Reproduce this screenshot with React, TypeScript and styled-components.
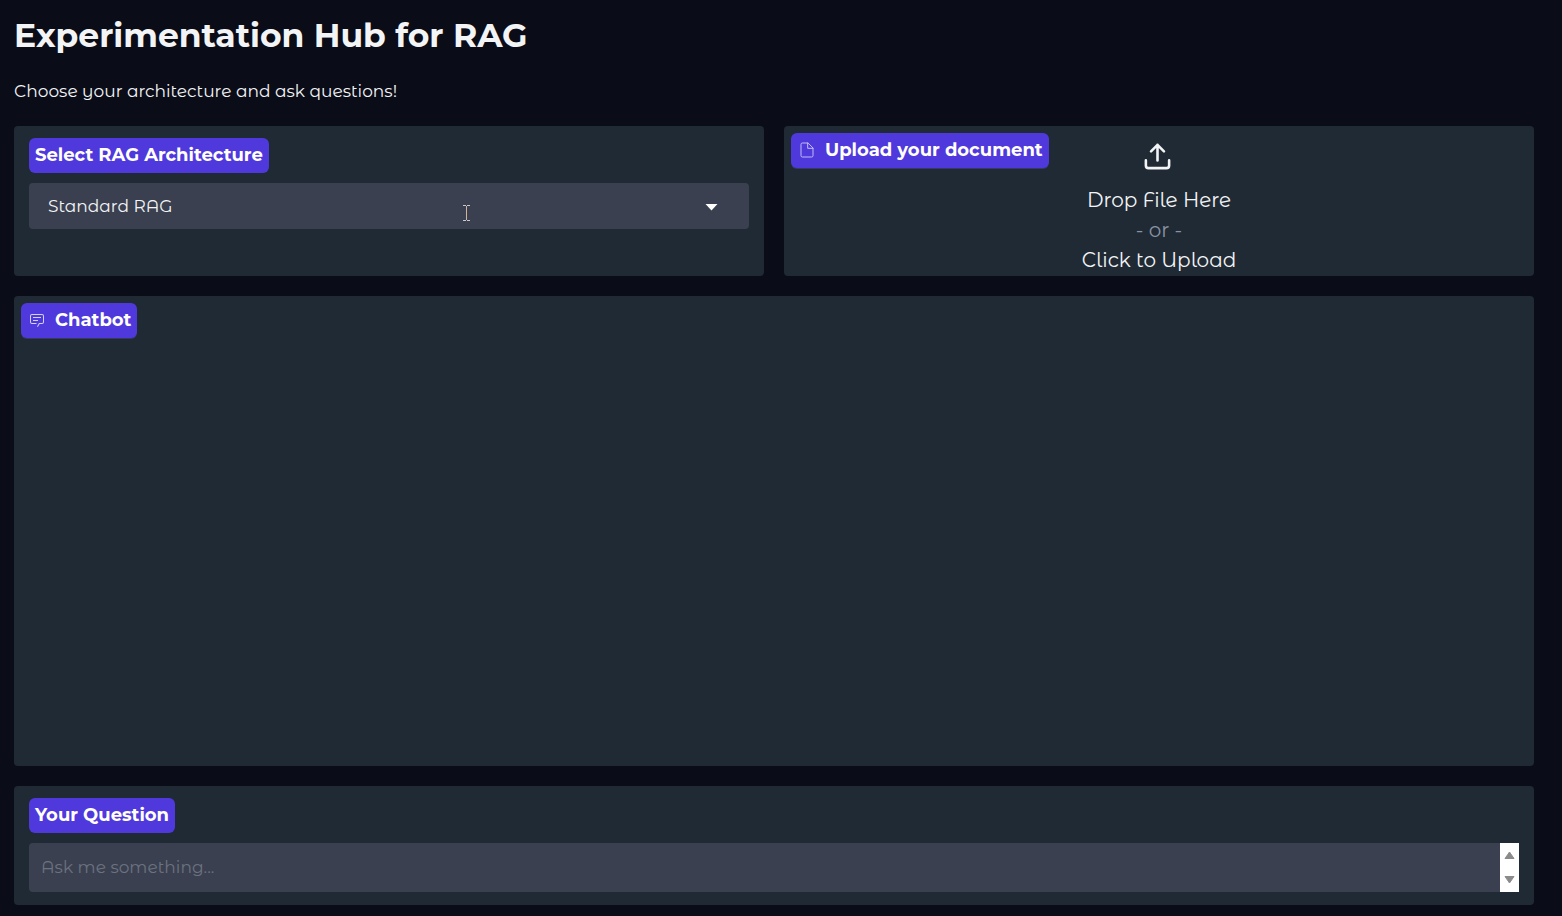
import React from "react";
import styled, { createGlobalStyle } from "styled-components";

const GlobalStyle = createGlobalStyle`
  *, *::before, *::after { box-sizing: border-box; }
  body {
    margin: 0;
    background: #0a0c17;
    color: #f3f4f6;
    font-family: "Montserrat Alternates", Montserrat, Inter, sans-serif;
    font-size: 17px;
    line-height: 27px;
  }
`;

const Page = styled.main`
  display: flex;
  flex-direction: column;
  gap: 20px;
  padding: 14px 28px 10px 14px;
`;

const Intro = styled.header`
  display: flex;
  flex-direction: column;
  gap: 22px;
  padding-bottom: 1px;
`;

const Title = styled.h1`
  margin: 0;
  font-family: Montserrat, Inter, sans-serif;
  font-size: 33px;
  font-weight: 700;
  line-height: 42px;
`;

const Lead = styled.p`
  margin: 0;
`;

const Row = styled.div`
  display: grid;
  grid-template-columns: 1fr 1fr;
  gap: 20px;
`;

const Panel = styled.section<{ $padded?: boolean; $minHeight?: number }>`
  position: relative;
  padding: ${(p) => (p.$padded ? "12px 15px 13px" : "0")};
  min-height: ${(p) => p.$minHeight ?? 0}px;
  border-radius: 4px;
  background: #202a35;
`;

const badge = `
  align-items: center;
  gap: 10px;
  height: 35px;
  padding: 0 6px 1px;
  border-radius: 6px;
  background: #4f38dc;
  color: #ffffff;
  font-family: Montserrat, Inter, sans-serif;
  font-size: 18px;
  font-weight: 700;
`;

const FieldLabel = styled.label`
  display: inline-flex;
  ${badge}
`;

const CornerLabel = styled.div`
  position: absolute;
  top: 7px;
  left: 7px;
  display: flex;
  pointer-events: none;
  ${badge}
  box-shadow: 0 1px 0 #343a63;

  svg {
    margin: 0 0 0 2px;
  }
`;

const Field = styled.div`
  position: relative;
  display: flex;
  margin-top: 10px;
  border-radius: 4px;
  background: #3a404f;
`;

const Select = styled.select`
  flex: 1;
  height: 46px;
  padding: 0 40px 0 19px;
  border: 0;
  border-radius: 4px;
  appearance: none;
  background: transparent;
  color: #f3f4f6;
  font: inherit;
`;

const Caret = styled.svg`
  position: absolute;
  top: 21px;
  right: 31px;
  pointer-events: none;
`;

const TextCursor = styled.svg`
  position: absolute;
  top: 22px;
  left: 60.3%;
  pointer-events: none;
`;

const DropZone = styled.button`
  display: flex;
  flex-direction: column;
  align-items: center;
  width: 100%;
  padding: 15px 0 0;
  border: 0;
  background: transparent;
  color: #f3f4f6;
  font: inherit;
  font-size: 20px;
  line-height: 30px;
  cursor: pointer;

  svg {
    margin: 0 4px 13px 0;
  }
`;

const Muted = styled.span`
  color: #8b93a3;
`;

const Question = styled.textarea`
  flex: 1;
  height: 49px;
  padding: 11px 12px;
  border: 0;
  border-radius: 4px;
  resize: none;
  overflow: hidden;
  background: transparent;
  color: #f3f4f6;
  font: inherit;

  &::placeholder {
    color: #6b7280;
    opacity: 1;
  }
`;

const Scroller = styled.div`
  display: flex;
  flex-direction: column;
  justify-content: space-between;
  width: 19px;
  padding: 2px 0;
  background: #ffffff;
`;

const ScrollButton = styled.button`
  display: flex;
  align-items: center;
  justify-content: center;
  height: 20px;
  padding: 0;
  border: 0;
  background: transparent;
`;

export default function App() {
  return (
    <>
      <GlobalStyle />
      <Page>
        <Intro>
          <Title>Experimentation Hub for RAG</Title>
          <Lead>Choose your architecture and ask questions!</Lead>
        </Intro>

        <Row>
          <Panel $padded $minHeight={150}>
            <FieldLabel htmlFor="architecture">Select RAG Architecture</FieldLabel>
            <Field>
              <Select id="architecture" defaultValue="standard">
                <option value="standard">Standard RAG</option>
              </Select>
              <TextCursor width="7" height="17" viewBox="0 0 7 17" shapeRendering="crispEdges" aria-hidden="true">
                <path d="M0 .5h3M4 .5h3M0 15.5h3M4 15.5h3" stroke="#c9c9cc" />
                <path d="M3.5 1v14" stroke="#cdb596" />
              </TextCursor>
              <Caret width="13" height="7" viewBox="0 0 13 7" aria-hidden="true">
                <path d="M.5 0h12l-6 6.5z" fill="#ffffff" />
              </Caret>
            </Field>
          </Panel>

          <Panel $minHeight={150}>
            <DropZone type="button">
              <svg width="31" height="31" viewBox="0 0 24 24" fill="none" stroke="currentColor" strokeWidth="2" strokeLinecap="round" strokeLinejoin="round" aria-hidden="true">
                <path d="M21 15v4a2 2 0 0 1-2 2H5a2 2 0 0 1-2-2v-4" />
                <path d="M17 8l-5-5-5 5M12 3v12" />
              </svg>
              <span>Drop File Here</span>
              <Muted>- or -</Muted>
              <span>Click to Upload</span>
            </DropZone>
            <CornerLabel>
              <svg width="16" height="16" viewBox="0 0 24 24" fill="none" stroke="#c4bcf5" strokeWidth="1.5" strokeLinecap="round" strokeLinejoin="round" aria-hidden="true">
                <path d="M13 1.5H5a2 2 0 0 0-2 2v17a2 2 0 0 0 2 2h14a2 2 0 0 0 2-2v-11z" />
                <path d="M13 1.5v8h8" />
              </svg>
              Upload your document
            </CornerLabel>
          </Panel>
        </Row>

        <Panel $minHeight={470}>
          <CornerLabel>
            <svg width="16" height="16" viewBox="0 0 32 32" fill="#d5cff8" aria-hidden="true">
              <path d="M17.74 30L16 29l4-7h6a2 2 0 0 0 2-2V8a2 2 0 0 0-2-2H6a2 2 0 0 0-2 2v12a2 2 0 0 0 2 2h9v2H6a4 4 0 0 1-4-4V8a4 4 0 0 1 4-4h20a4 4 0 0 1 4 4v12a4 4 0 0 1-4 4h-4.84z" />
              <path d="M8 10h16v2H8zM8 16h10v2H8z" />
            </svg>
            Chatbot
          </CornerLabel>
        </Panel>

        <Panel $padded>
          <FieldLabel htmlFor="question">Your Question</FieldLabel>
          <Field>
            <Question id="question" rows={1} placeholder="Ask me something..." />
            <Scroller>
              <ScrollButton type="button" aria-label="Scroll up">
                <svg width="11" height="8" viewBox="0 0 11 8" aria-hidden="true">
                  <path d="M1 7.5h9L5.5 1z" fill="#8b8b8b" stroke="#8b8b8b" strokeLinejoin="round" />
                </svg>
              </ScrollButton>
              <ScrollButton type="button" aria-label="Scroll down">
                <svg width="11" height="8" viewBox="0 0 11 8" aria-hidden="true">
                  <path d="M1 .5h9L5.5 7z" fill="#8b8b8b" stroke="#8b8b8b" strokeLinejoin="round" />
                </svg>
              </ScrollButton>
            </Scroller>
          </Field>
        </Panel>
      </Page>
    </>
  );
}
